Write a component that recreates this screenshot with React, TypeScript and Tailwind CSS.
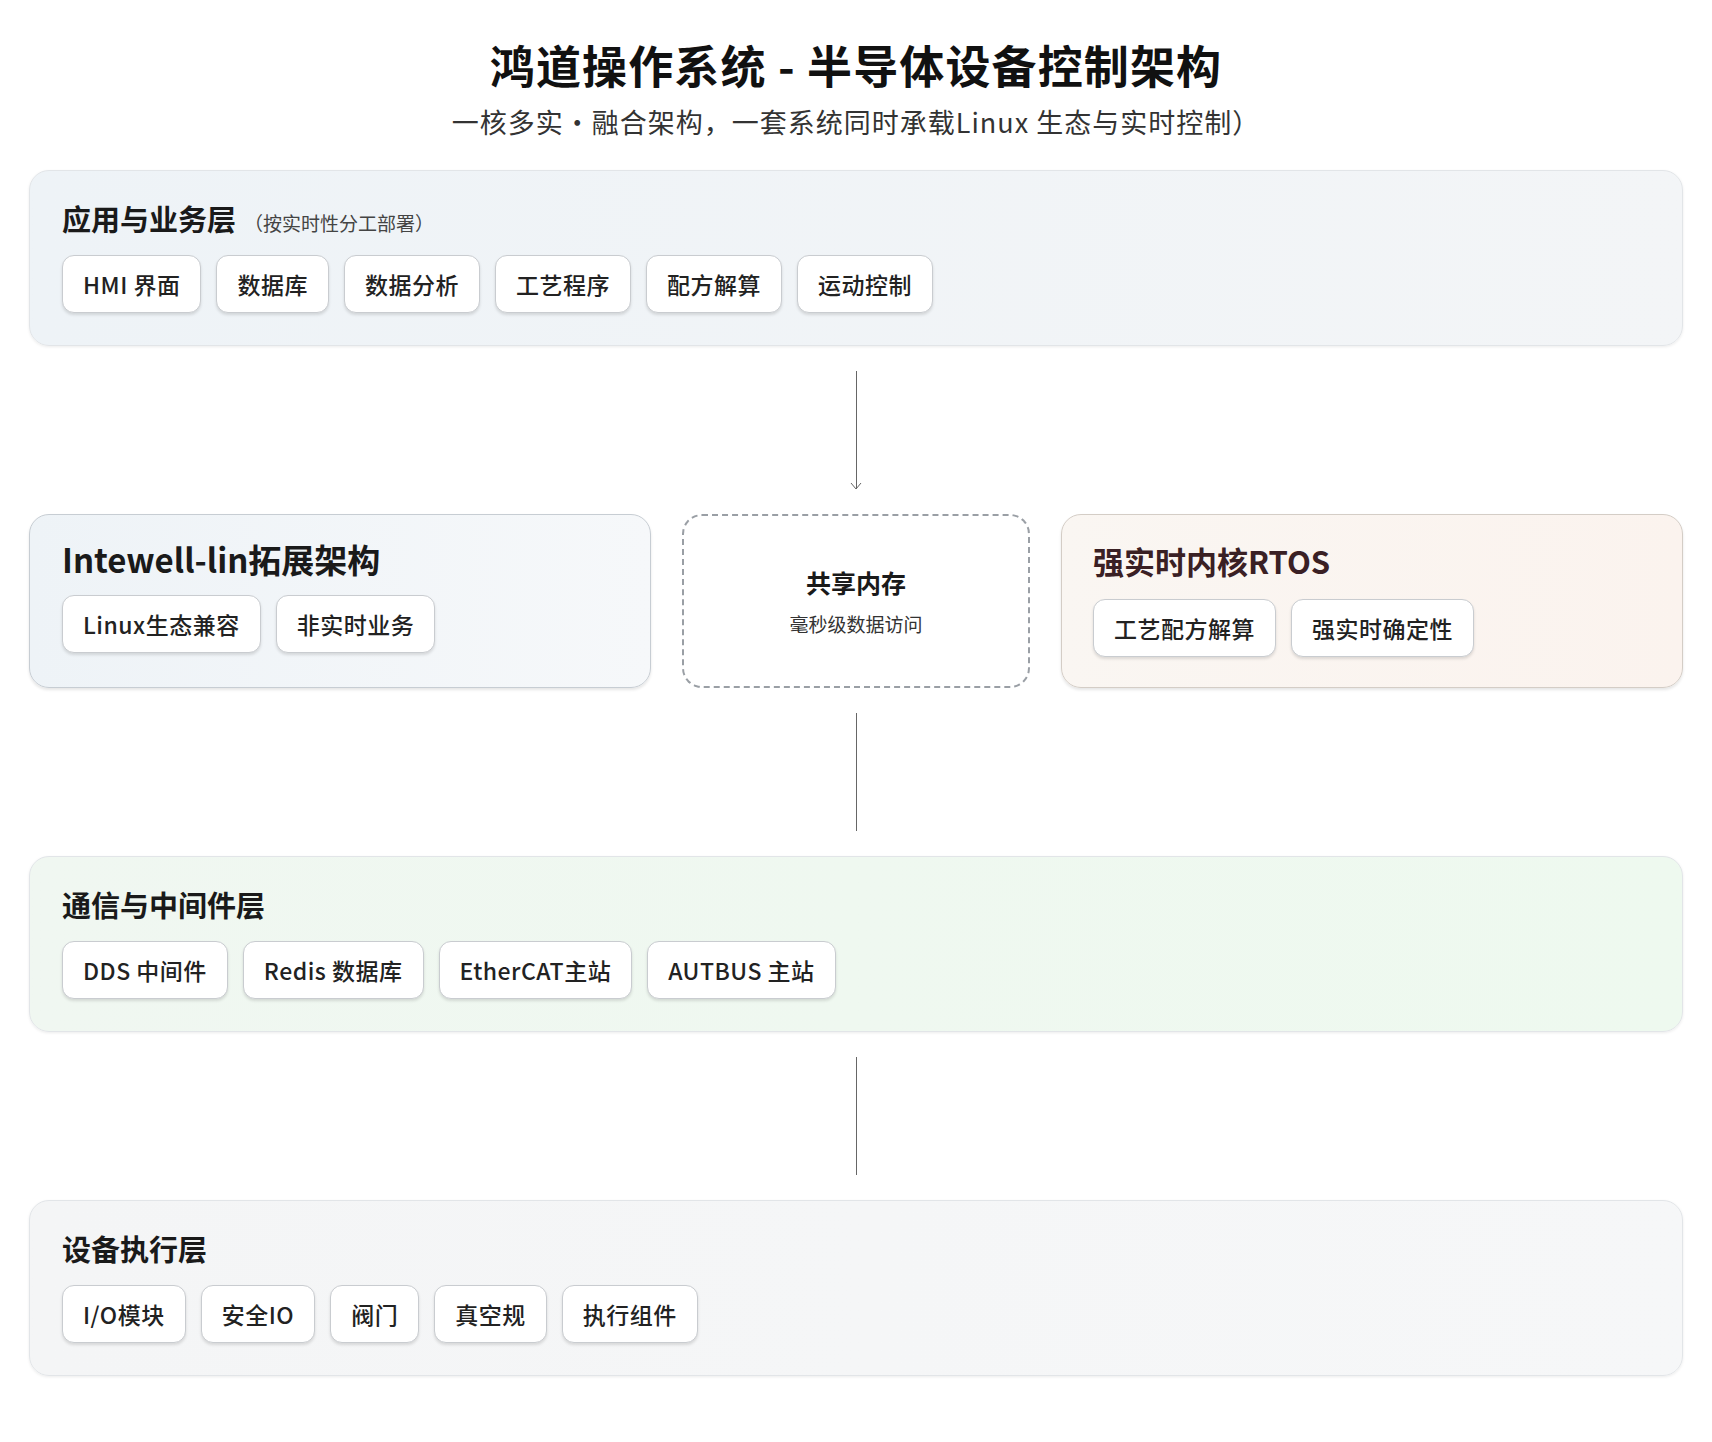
const F = { fontFamily: '"Noto Sans CJK SC", "Noto Sans", sans-serif' };

function Chip({ t }: { t: string }) {
  return (
    <div className="h-[58px] px-[20px] flex items-center rounded-[12px] border border-[#c9ccd0] bg-white shadow-[0_2px_3px_rgba(0,0,0,0.12)] text-[23px] font-medium text-[#222] tracking-[0.5px]">
      {t}
    </div>
  );
}

function Layer({ title, sub, chips, bg }: { title: string; sub?: string; chips: string[]; bg: string }) {
  return (
    <div className={`h-[176px] rounded-[20px] border border-[#e2e5e8] shadow-[0_1px_3px_rgba(0,0,0,0.08)] px-[32px] pt-[26px] ${bg}`}>
      <div className="flex items-baseline gap-2 h-[40px]">
        <span className="text-[29px] font-bold text-[#1a1a1a]">{title}</span>
        {sub && <span className="text-[19px] text-[#444]">{sub}</span>}
      </div>
      <div className="flex gap-[15px] mt-[18px]">
        {chips.map((c) => <Chip key={c} t={c} />)}
      </div>
    </div>
  );
}

function Connector({ arrow }: { arrow?: boolean }) {
  return (
    <div className="h-[168px] flex flex-col items-center justify-center">
      <div className="w-px h-[118px] bg-[#666]" />
      {arrow && (
        <svg width="12" height="8" viewBox="0 0 12 8" className="-mt-[7px]">
          <path d="M1 1 L6 7 L11 1" fill="none" stroke="#666" strokeWidth="1" />
        </svg>
      )}
    </div>
  );
}

export default function App() {
  return (
    <div className="w-[1712px] h-[1442px] bg-white px-[29px] pt-[36px]" style={F}>
      <div className="text-center text-[45px] font-bold text-[#111] leading-[58px] tracking-wide">鸿道操作系统 - 半导体设备控制架构</div>
      <div className="text-center text-[27px] text-[#333] mt-[12px] leading-[32px] tracking-[1px]">一核多实·融合架构，一套系统同时承载Linux 生态与实时控制）</div>
      <div className="mt-[32px]">
        <Layer title="应用与业务层" sub="（按实时性分工部署）" chips={["HMI 界面", "数据库", "数据分析", "工艺程序", "配方解算", "运动控制"]} bg="bg-gradient-to-r from-[#eef3f7] to-[#f3f5f7]" />
      </div>
      <Connector arrow />
      <div className="flex gap-[31px] h-[174px]">
        <div className="w-[622px] rounded-[20px] border border-[#c7cdd3] shadow-[0_2px_3px_rgba(0,0,0,0.1)] bg-gradient-to-r from-[#eef3f7] to-[#f6f8fa] px-[32px] pt-[22px]">
          <div className="text-[33px] font-bold text-[#1a1a1a] leading-[44px]">Intewell-lin拓展架构</div>
          <div className="flex gap-[15px] mt-[14px]">
            <Chip t="Linux生态兼容" />
            <Chip t="非实时业务" />
          </div>
        </div>
        <div className="w-[348px] rounded-[20px] border-2 border-dashed border-[#9a9fa5] bg-white flex flex-col items-center justify-center">
          <div className="text-[25px] font-bold text-[#1a1a1a]">共享内存</div>
          <div className="text-[19px] text-[#333] mt-[8px]">毫秒级数据访问</div>
        </div>
        <div className="flex-1 rounded-[20px] border border-[#d4cdc6] shadow-[0_2px_3px_rgba(0,0,0,0.1)] bg-gradient-to-r from-[#faf6f2] to-[#fbf3ee] px-[31px] pt-[24px]">
          <div className="text-[31px] font-bold text-[#3a2024] leading-[44px]">强实时内核RTOS</div>
          <div className="flex gap-[15px] mt-[16px]">
            <Chip t="工艺配方解算" />
            <Chip t="强实时确定性" />
          </div>
        </div>
      </div>
      <Connector />
      <Layer title="通信与中间件层" chips={["DDS 中间件", "Redis 数据库", "EtherCAT主站", "AUTBUS 主站"]} bg="bg-gradient-to-r from-[#f0f7f1] to-[#eef9ef]" />
      <Connector />
      <Layer title="设备执行层" chips={["I/O模块", "安全IO", "阀门", "真空规", "执行组件"]} bg="bg-gradient-to-r from-[#f4f5f6] to-[#f6f7f8]" />
    </div>
  );
}
